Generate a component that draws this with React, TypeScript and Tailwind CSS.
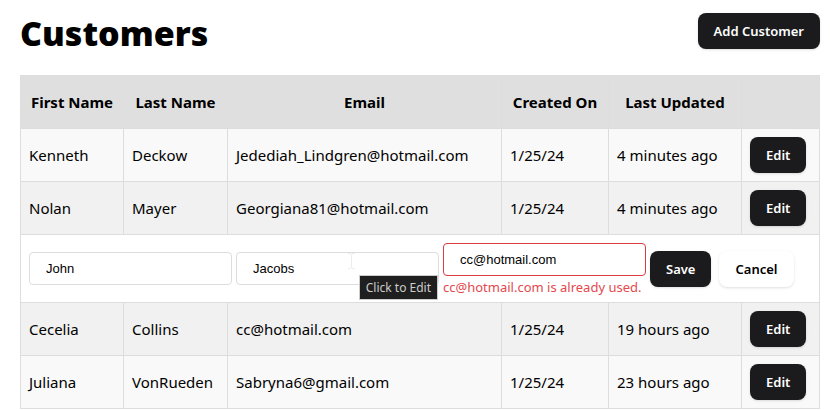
import React from "react";

type Customer = {
  first: string;
  last: string;
  email: string;
  created: string;
  updated: string;
};

const before: Customer[] = [
  { first: "Kenneth", last: "Deckow", email: "Jedediah_Lindgren@hotmail.com", created: "1/25/24", updated: "4 minutes ago" },
  { first: "Nolan", last: "Mayer", email: "Georgiana81@hotmail.com", created: "1/25/24", updated: "4 minutes ago" },
];

const after: Customer[] = [
  { first: "Cecelia", last: "Collins", email: "cc@hotmail.com", created: "1/25/24", updated: "19 hours ago" },
  { first: "Juliana", last: "VonRueden", email: "Sabryna6@gmail.com", created: "1/25/24", updated: "23 hours ago" },
];

const primary =
  "h-9 rounded-lg bg-[#1b1b1d] px-4 text-[13px] leading-5 font-semibold whitespace-nowrap text-white shadow-sm";
const cell = "border border-[#dddddd] p-2";
const field =
  "block h-[33px] w-full rounded border bg-white px-4 font-['Liberation_Sans',sans-serif] text-[13px] text-black outline-none";

function CustomerRow({ customer, shade }: { customer: Customer; shade: string }) {
  return (
    <tr className={shade}>
      <td className={cell}>{customer.first}</td>
      <td className={cell}>{customer.last}</td>
      <td className={cell}>{customer.email}</td>
      <td className={cell}>{customer.created}</td>
      <td className={cell}>{customer.updated}</td>
      <td className={cell}>
        <button type="button" className={`block ${primary}`}>Edit</button>
      </td>
    </tr>
  );
}

function EditRow() {
  return (
    <tr>
      <td colSpan={6} className={`bg-white ${cell}`}>
        <form className="flex items-center gap-1" onSubmit={(e) => e.preventDefault()}>
          <div className="w-[203px]">
            <input aria-label="First Name" defaultValue="John" className={`border-[#dddddd] ${field}`} />
          </div>
          <div className="relative w-[203px]">
            <input aria-label="Last Name" defaultValue="Jacobs" className={`border-[#dddddd] ${field}`} />
            <svg className="absolute top-px right-[84px]" width="7" height="16" viewBox="0 0 7 16" fill="none" stroke="#ececec" aria-hidden="true">
              <path d="M0 .5h3M4 .5h3M0 15.5h3M4 15.5h3M3.5 1v14" />
            </svg>
            <div role="tooltip" className="absolute top-[23px] right-px border border-[#cccccc] bg-[#1f1f1f] px-1.5 text-xs leading-[23px] whitespace-nowrap text-[#cccccc]">
              Click to Edit
            </div>
          </div>
          <div className="w-[203px]">
            <input
              aria-label="Email"
              aria-invalid="true"
              aria-describedby="email-error"
              defaultValue="cc@hotmail.com"
              className={`border-[#dc3c40] ${field}`}
            />
            <p id="email-error" className="pt-1 text-[13px] leading-[14px] whitespace-nowrap text-[#e5484d]">
              cc@hotmail.com is already used.
            </p>
          </div>
          <div className="flex gap-2">
            <button type="submit" className={primary}>Save</button>
            <button type="button" className="h-9 rounded-lg bg-white px-4 text-[13px] leading-5 font-semibold text-black shadow-sm">
              Cancel
            </button>
          </div>
        </form>
      </td>
    </tr>
  );
}

export default function App() {
  return (
    <main className="bg-white pt-[13px] pr-[10px] pl-5 font-['Noto_Sans',sans-serif] text-[15px] leading-6 text-black">
      <header className="flex items-start justify-between">
        <h1 className="font-['Open_Sans',sans-serif] text-[34px] leading-10 font-extrabold">Customers</h1>
        <button type="button" className={primary}>Add Customer</button>
      </header>
      <table className="mt-[22px] w-full table-fixed border-collapse">
        <colgroup>
          <col className="w-[103px]" />
          <col className="w-[104px]" />
          <col />
          <col className="w-[107px]" />
          <col className="w-[133px]" />
          <col className="w-[78px]" />
        </colgroup>
        <thead>
          <tr className="h-[53px] bg-[#dfdfdf]">
            <th className={cell}>First Name</th>
            <th className={cell}>Last Name</th>
            <th className={cell}>Email</th>
            <th className={cell}>Created On</th>
            <th className={cell}>Last Updated</th>
            <th className={cell} aria-label="Actions" />
          </tr>
        </thead>
        <tbody>
          <CustomerRow customer={before[0]} shade="bg-[#f9f9f9]" />
          <CustomerRow customer={before[1]} shade="bg-[#f1f1f1]" />
          <EditRow />
          <CustomerRow customer={after[0]} shade="bg-[#f1f1f1]" />
          <CustomerRow customer={after[1]} shade="bg-[#f9f9f9]" />
          <tr className="bg-[#f1f1f1]" />
        </tbody>
      </table>
    </main>
  );
}
